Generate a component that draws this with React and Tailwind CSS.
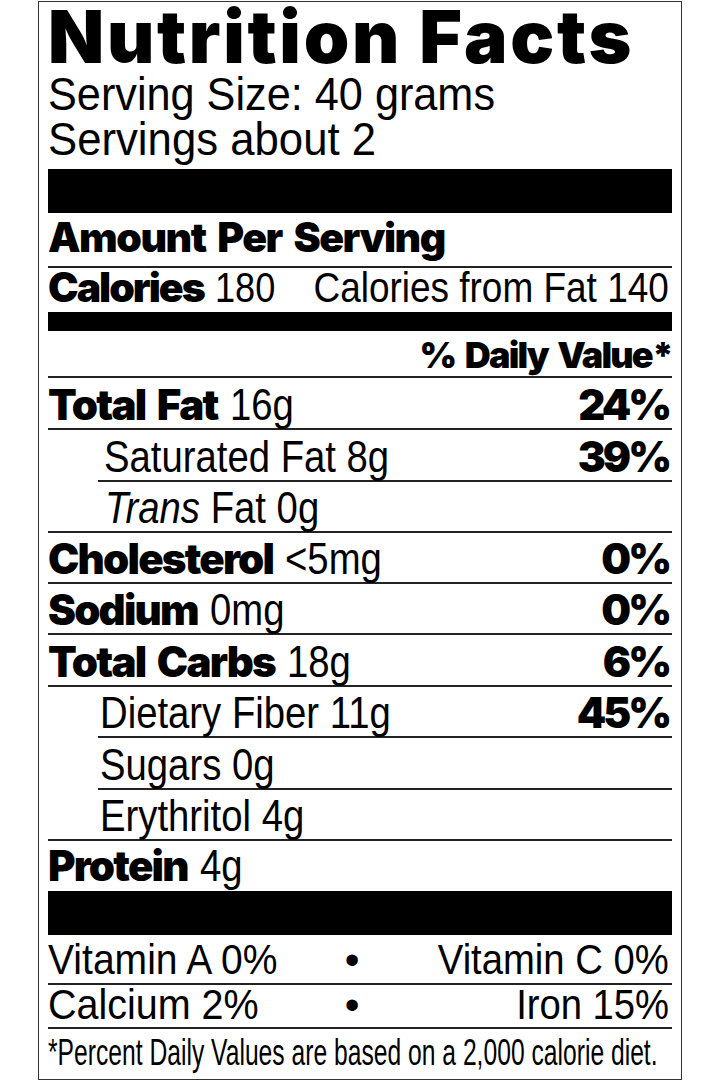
const REG = "[font-family:'Liberation_Sans',Arial,sans-serif]";
const HV = "[font-family:Inter,'Liberation_Sans',sans-serif] font-black";
const LINE = "border-b-2 border-[#222]";

function B({ children }) {
  return (
    <span className={`${HV} text-[42px] tracking-[-1.8px] [word-spacing:5px]`}>{children}</span>
  );
}

function V({ children }) {
  return <span className="inline-block origin-left scale-x-[0.87]">{children}</span>;
}

function Row({ h, indentLine = false, textPad = "", border = true, pb = "pb-[1px]", pct, children }) {
  return (
    <div
      className={`flex flex-col justify-end ${h} ${border ? LINE : ""} ${indentLine ? "ml-[50px]" : ""}`}
    >
      <div className={`flex items-baseline justify-between ${pb} ${textPad}`}>
        <div className={`whitespace-nowrap ${REG} text-[44px] leading-none`}>{children}</div>
        {pct && (
          <span className={`${HV} text-[42px] leading-none tracking-[-3px] pr-[3px]`}>{pct}</span>
        )}
      </div>
    </div>
  );
}

export default function App() {
  return (
    <div className="w-[720px] h-[1080px] bg-white pt-[1px] overflow-hidden text-black">
      <div className="ml-[38px] w-[644px] h-[1079px] border border-[#333] px-[9px] flex flex-col">
        {/* Title */}
        <div className={`${HV} text-[73px] leading-[69px] tracking-[2.7px] whitespace-nowrap`}>
          Nutrition Facts
        </div>
        <div className={`${REG} text-[47px] leading-[45px] whitespace-nowrap`}>
          <div>
            <span className="inline-block origin-left scale-x-[0.92]">Serving Size: 40 grams</span>
          </div>
          <div>
            <span className="inline-block origin-left scale-x-[0.93]">Servings about 2</span>
          </div>
        </div>
        <div className="mt-[8px] h-[44px] bg-black shrink-0" />

        {/* Amount per serving */}
        <div className={`h-[55px] shrink-0 flex flex-col justify-end pb-[8px] ${LINE}`}>
          <div
            className={`${HV} text-[41px] leading-none tracking-[-1.5px] [word-spacing:5px] whitespace-nowrap`}
          >
            Amount Per Serving
          </div>
        </div>

        {/* Calories */}
        <div className="h-[44px] shrink-0 flex flex-col justify-end pb-[3px]">
          <div className={`flex items-baseline ${REG} text-[42px] leading-none whitespace-nowrap`}>
            <div className="shrink-0">
              <span className={`${HV} text-[41px] tracking-[-2px]`}>Calories</span>{" "}
              <span className="inline-block origin-left scale-x-[0.86]">180</span>
            </div>
            <div className="flex-1 min-w-0 flex justify-end pr-[3px]">
              <span className="inline-block origin-right scale-x-[0.88]">Calories from Fat 140</span>
            </div>
          </div>
        </div>
        <div className="h-[19px] bg-black shrink-0" />

        {/* % Daily Value */}
        <div className={`h-[47px] shrink-0 flex flex-col justify-end items-end pb-[3px] ${LINE}`}>
          <div
            className={`${HV} text-[36px] leading-none tracking-[-1.8px] [word-spacing:4px] whitespace-nowrap`}
          >
            % Daily Value*
          </div>
        </div>

        <Row h="h-[52px]" pct="24%">
          <B>Total Fat</B> <V>16g</V>
        </Row>
        <Row h="h-[52px]" indentLine textPad="pl-[6px]" pct="39%">
          <V>Saturated Fat 8g</V>
        </Row>
        <Row h="h-[51px]" textPad="pl-[57px]">
          <V>
            <i>Trans</i> Fat 0g
          </V>
        </Row>
        <Row h="h-[51px]" pct="0%">
          <B>Cholesterol</B> <V>&lt;5mg</V>
        </Row>
        <Row h="h-[51px]" pct="0%">
          <B>Sodium</B> <V>0mg</V>
        </Row>
        <Row h="h-[52px]" pct="6%">
          <B>Total Carbs</B> <V>18g</V>
        </Row>
        <Row h="h-[51px]" indentLine textPad="pl-[2px]" pct="45%">
          <V>Dietary Fiber 11g</V>
        </Row>
        <Row h="h-[52px]" indentLine textPad="pl-[2px]">
          <V>Sugars 0g</V>
        </Row>
        <Row h="h-[51px]" textPad="pl-[52px]">
          <V>Erythritol 4g</V>
        </Row>
        <Row h="h-[50px]" border={false} pb="pb-[3px]">
          <B>Protein</B> <V>4g</V>
        </Row>

        <div className="h-[44px] bg-black shrink-0" />

        {/* Vitamins */}
        <div className={`h-[50px] shrink-0 flex flex-col justify-end pb-[2px] ${LINE}`}>
          <div
            className={`grid grid-cols-[296px_16px_1fr] items-baseline ${REG} text-[42px] leading-none whitespace-nowrap`}
          >
            <div>
              <span className="inline-block origin-left scale-x-[0.93]">Vitamin A 0%</span>
            </div>
            <div className="text-center">•</div>
            <div className="flex justify-end min-w-0 pr-[3px]">
              <span className="inline-block origin-right scale-x-[0.91]">Vitamin C 0%</span>
            </div>
          </div>
        </div>
        <div className={`h-[44px] shrink-0 flex flex-col justify-end pb-[1px] ${LINE}`}>
          <div
            className={`grid grid-cols-[296px_16px_1fr] items-baseline ${REG} text-[42px] leading-none whitespace-nowrap`}
          >
            <div>
              <span className="inline-block origin-left scale-x-[0.94]">Calcium 2%</span>
            </div>
            <div className="text-center">•</div>
            <div className="flex justify-end min-w-0 pr-[3px]">
              <span className="inline-block origin-right scale-x-[0.91]">Iron 15%</span>
            </div>
          </div>
        </div>

        {/* Footnote */}
        <div className="flex-1 flex flex-col justify-end pb-[8px]">
          <div className={`${REG} text-[36px] leading-none whitespace-nowrap`}>
            <span className="inline-block origin-left scale-x-[0.685]">
              *Percent Daily Values are based on a 2,000 calorie diet.
            </span>
          </div>
        </div>
      </div>
    </div>
  );
}
